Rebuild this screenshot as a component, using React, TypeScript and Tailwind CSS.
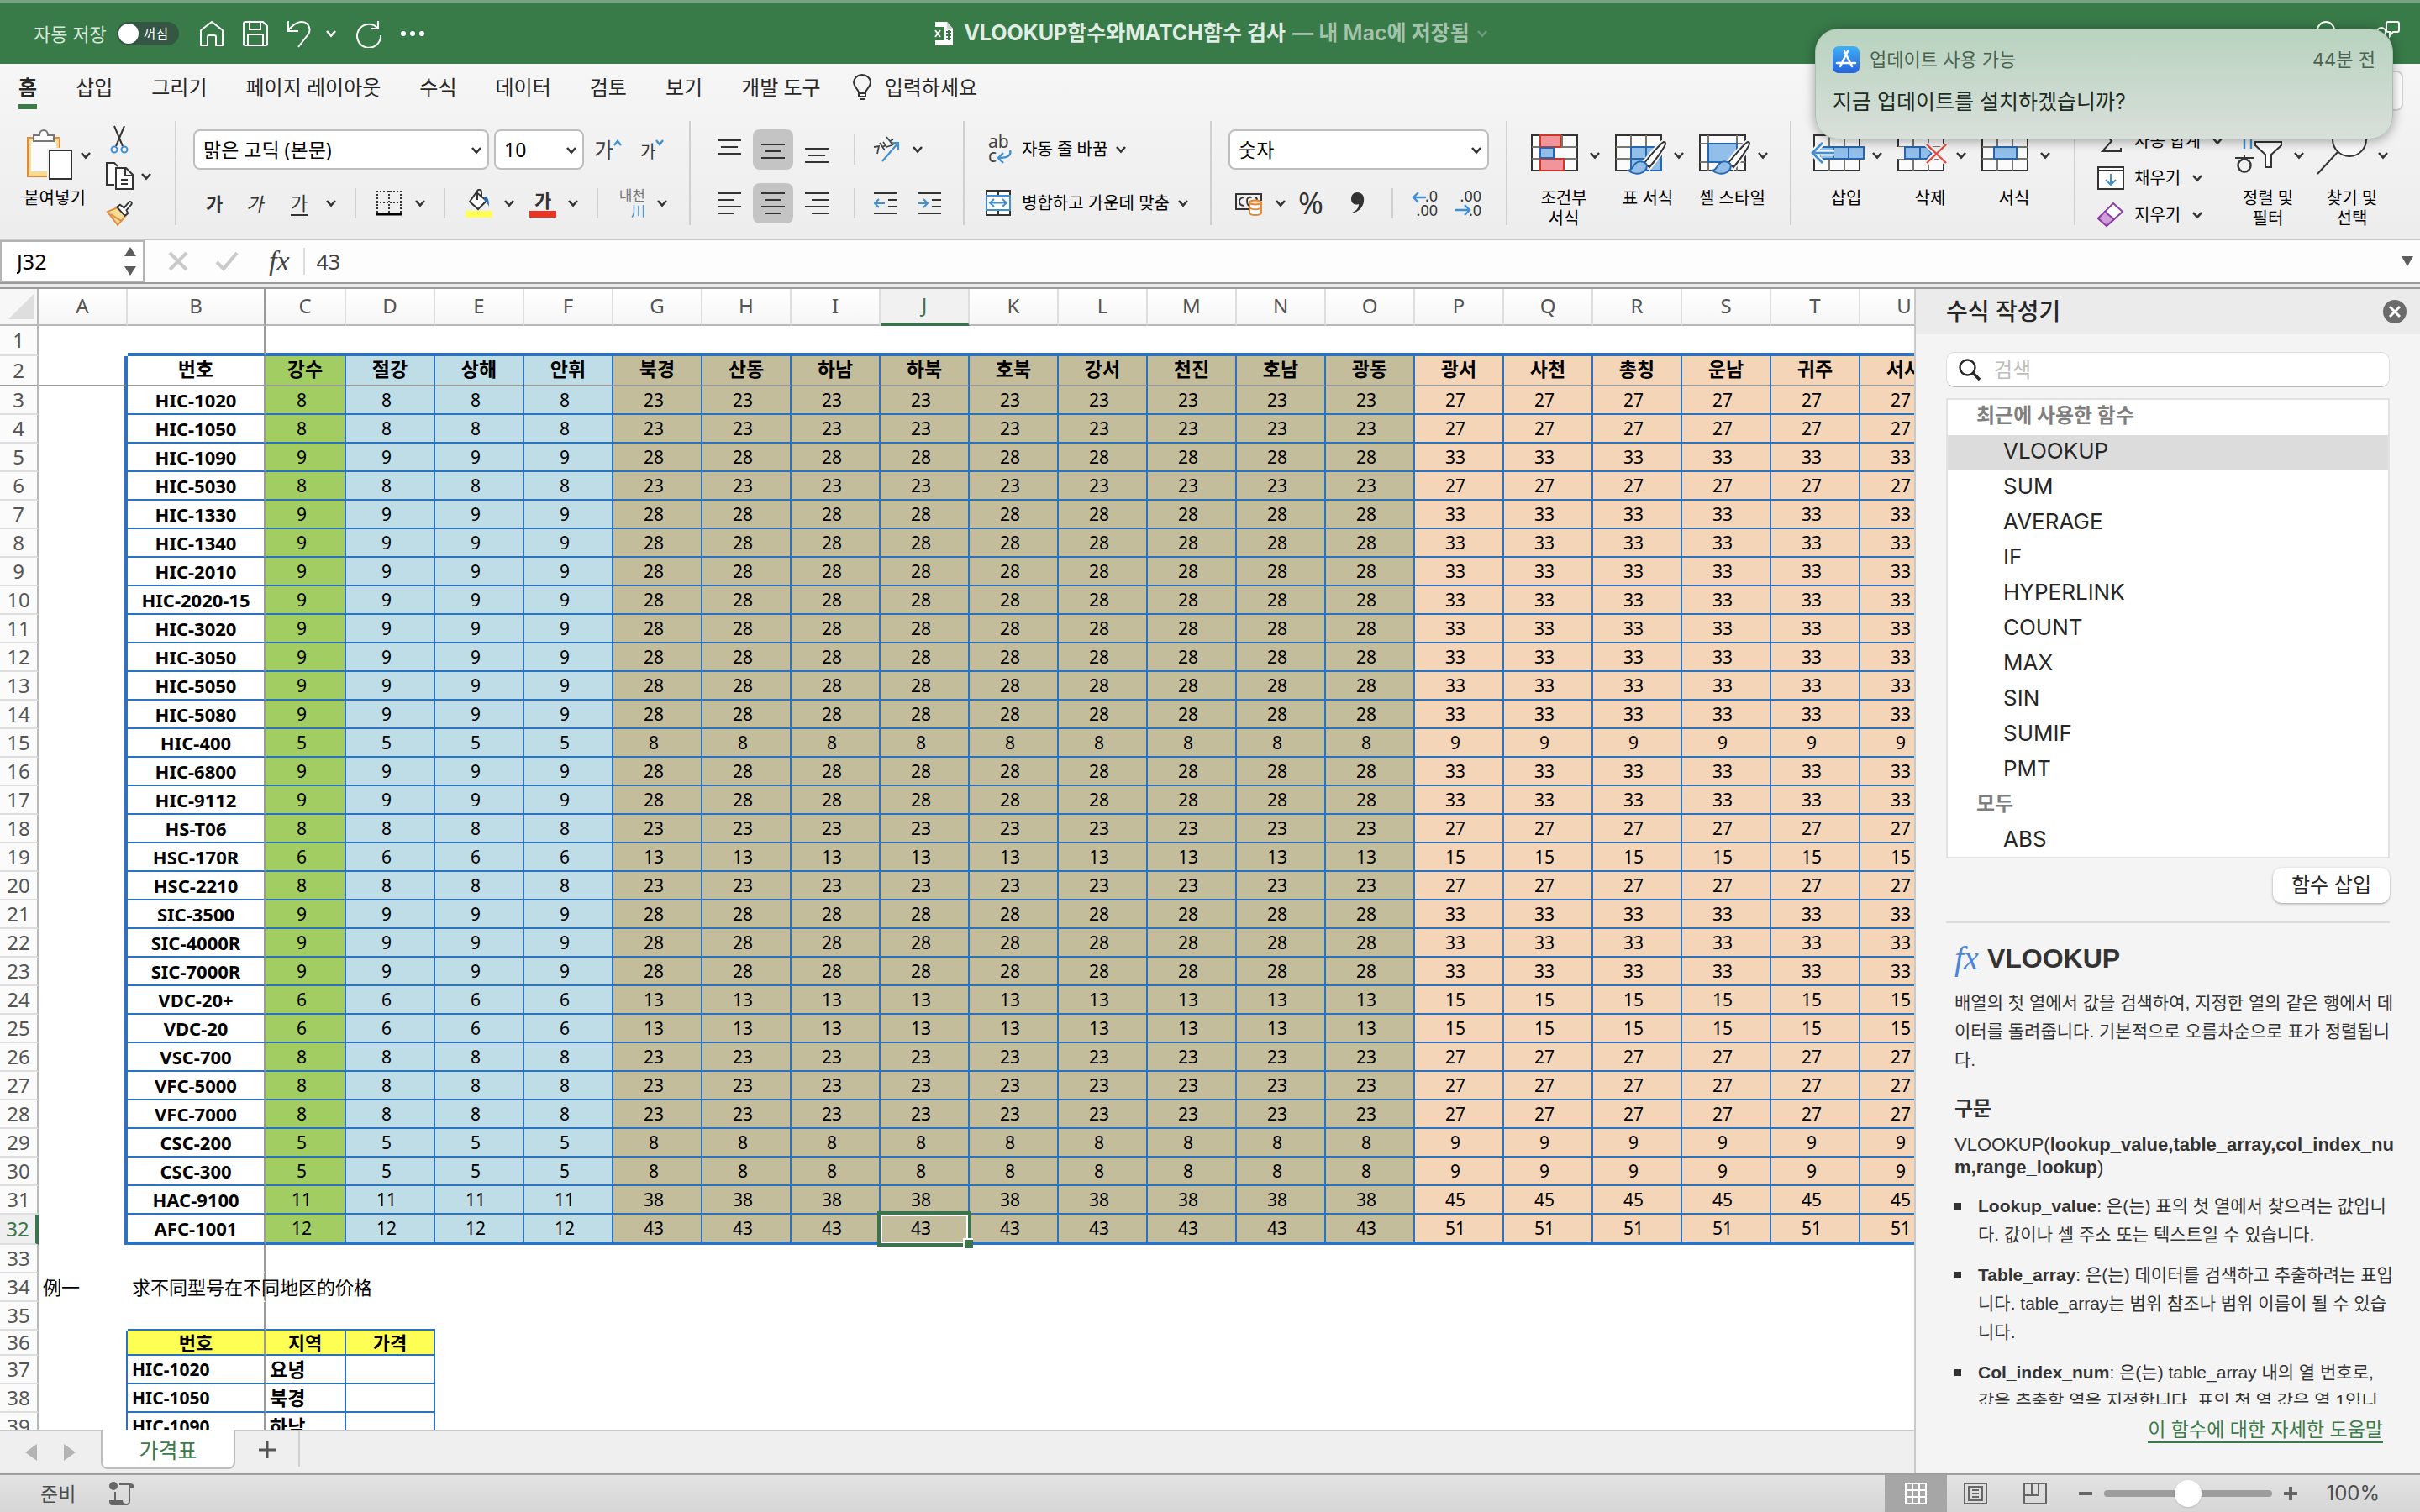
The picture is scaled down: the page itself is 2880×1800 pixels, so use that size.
import React from "react";
import clsx from "clsx";

const columns = "ABCDEFGHIJKLMNOPQRSTU".split("");

const regions = [
  "강수", "절강", "상해", "안휘", "북경", "산동", "하남", "하북", "호북", "강서",
  "천진", "호남", "광동", "광서", "사천", "총칭", "운남", "귀주", "서사",
];

// price per tier: [near, middle, far]
const tiers: Record<number, number[]> = {
  5: [5, 8, 9],
  6: [6, 13, 15],
  8: [8, 23, 27],
  9: [9, 28, 33],
  11: [11, 38, 45],
  12: [12, 43, 51],
};

const products: [string, number][] = [
  ["HIC-1020", 8], ["HIC-1050", 8], ["HIC-1090", 9], ["HIC-5030", 8], ["HIC-1330", 9],
  ["HIC-1340", 9], ["HIC-2010", 9], ["HIC-2020-15", 9], ["HIC-3020", 9], ["HIC-3050", 9],
  ["HIC-5050", 9], ["HIC-5080", 9], ["HIC-400", 5], ["HIC-6800", 9], ["HIC-9112", 9],
  ["HS-T06", 8], ["HSC-170R", 6], ["HSC-2210", 8], ["SIC-3500", 9], ["SIC-4000R", 9],
  ["SIC-7000R", 9], ["VDC-20+", 6], ["VDC-20", 6], ["VSC-700", 8], ["VFC-5000", 8],
  ["VFC-7000", 8], ["CSC-200", 5], ["CSC-300", 5], ["HAC-9100", 11], ["AFC-1001", 12],
];

const lookups = [
  ["HIC-1020", "요녕"],
  ["HIC-1050", "북경"],
  ["HIC-1090", "하남"],
];

const recentFunctions = ["VLOOKUP", "SUM", "AVERAGE", "IF", "HYPERLINK", "COUNT", "MAX", "SIN", "SUMIF", "PMT"];

const tabs = ["홈", "삽입", "그리기", "페이지 레이아웃", "수식", "데이터", "검토", "보기", "개발 도구"];

const regionColor = (i: number) => {
  if (i === 0) return "bg-[#a2cd62]";
  if (i < 4) return "bg-[#bfdde7]";
  if (i < 13) return "bg-[#c4bd9b]";
  return "bg-[#f5d5b8]";
};

const tierIndex = (i: number) => (i < 4 ? 0 : i < 13 ? 1 : 2);

/* ---------- small pieces ---------- */

function Chevron({ className = "text-[#333]" }: { className?: string }) {
  return (
    <svg width="14" height="10" viewBox="0 0 14 10" className={clsx("shrink-0", className)} fill="none" stroke="currentColor" strokeWidth="2.6">
      <path d="M2 2l5 5.5L12 2" />
    </svg>
  );
}

function ChevronButton({ label }: { label: string }) {
  return (
    <button aria-label={label} className="flex h-8 w-6 shrink-0 items-center justify-center">
      <Chevron />
    </button>
  );
}

function Split({ label, children }: { label: string; children: React.ReactNode }) {
  return (
    <div className="flex items-center gap-2">
      <button aria-label={label} className="flex items-center justify-center">{children}</button>
      <ChevronButton label={`${label} 옵션`} />
    </div>
  );
}

const Rule = ({ className = "mr-6" }: { className?: string }) => (
  <div className={clsx("ml-4 h-9 w-[2px] shrink-0 bg-[#d0d0d0]", className)} />
);

const GroupRule = () => <div className="h-[124px] w-[2px] shrink-0 bg-[#d0d0d0]" />;

function LinesIcon({ rows, stroke = "#333" }: { rows: [number, number, number][]; stroke?: string }) {
  return (
    <svg width="28" height="36" viewBox="0 0 28 36" stroke={stroke} strokeWidth="2">
      {rows.map(([x1, x2, y]) => (
        <line key={y} x1={x1} x2={x2} y1={y} y2={y} />
      ))}
    </svg>
  );
}

function AlignButton({ label, active, children }: { label: string; active?: boolean; children: React.ReactNode }) {
  return (
    <button aria-label={label} aria-pressed={!!active} className={clsx("flex size-12 items-center justify-center rounded-lg", active && "bg-[#c4c4c4]")}>
      {children}
    </button>
  );
}

function BigButton({ label, children }: { label: React.ReactNode; children: React.ReactNode }) {
  return (
    <button className="flex w-[100px] shrink-0 flex-col gap-2 text-black">
      <span className="flex items-center gap-1">
        <svg width="60" height="62" viewBox="0 0 60 62" fill="none" overflow="visible">{children}</svg>
        <span className="flex w-6 justify-center"><Chevron /></span>
      </span>
      <span className="w-[78px] text-center text-[20px] leading-6 whitespace-nowrap">{label}</span>
    </button>
  );
}

function SmallButton({ label, icon }: { label: string; icon: React.ReactNode }) {
  return (
    <button className="flex h-11 items-center text-[20px] whitespace-nowrap text-black">
      <span className="mr-3 flex w-8 justify-center">{icon}</span>
      {label}
      <span className="ml-2 flex w-6 justify-center"><Chevron /></span>
    </button>
  );
}

const Grid = ({ x = 1, y = 7 }: { x?: number; y?: number }) => (
  <>
    <rect x={x} y={y} width="54" height="42" fill="#fbfbfb" stroke="#333" strokeWidth="2" />
    <path d={`M${x + 18} ${y}v42M${x + 36} ${y}v42M${x} ${y + 14}h54M${x} ${y + 28}h54`} stroke="#777770" strokeWidth="2" />
  </>
);

const PaintBrush = () => (
  <>
    <path d="M58 15c-3 1-17 17-23 25l6 5C48 37 60 20 60 17c0-1-1-2-2-2z" fill="#fff" stroke="#f2f2f2" strokeWidth="6" />
    <path d="M58 15c-3 1-17 17-23 25l6 5C48 37 60 20 60 17c0-1-1-2-2-2z" fill="#fff" stroke="#333" strokeWidth="2" />
    <path d="M16 49c5-1 5-5 8-8 4-4 10-3 13 0 2 4 0 8-4 10-5 3-12 2-17-2z" fill="#92bfe9" stroke="#2766b0" strokeWidth="2" />
  </>
);

/* ---------- title bar ---------- */

function TitleBar() {
  return (
    <header className="relative flex h-[76px] items-center justify-between border-t-4 border-[#76a483] bg-[#387a48] px-10 text-white">
      <div className="flex items-center">
        <label htmlFor="autosave" className="text-[22px] text-[#dbe8de]">자동 저장</label>
        <span className="relative ml-3 flex h-7 w-[74px] items-center rounded-full bg-[#355643] pr-3 pl-8 text-[16px]">
          <input id="autosave" type="checkbox" role="switch" className="absolute inset-0 appearance-none" />
          <span className="absolute top-[2px] left-[2px] size-6 rounded-full bg-white shadow" />
          꺼짐
        </span>
        <div className="ml-6 flex items-center gap-[22px]">
          <button aria-label="홈">
            <svg width="30" height="32" viewBox="0 0 30 32" fill="none" stroke="#fff" strokeWidth="2">
              <path d="M2 12L15 2l13 10v18h-8V20c0-1-1-2-2-2h-6c-1 0-2 1-2 2v10H2z" strokeLinejoin="round" />
            </svg>
          </button>
          <button aria-label="저장">
            <svg width="30" height="30" viewBox="0 0 30 30" fill="none" stroke="#fff" strokeWidth="2">
              <path d="M3 1h21l5 5v21a2 2 0 01-2 2H3a2 2 0 01-2-2V3a2 2 0 012-2z" />
              <path d="M8 1v9h13V1M6 29V16h18v13" />
            </svg>
          </button>
          <div className="flex items-center gap-4">
            <button aria-label="실행 취소">
              <svg width="30" height="34" viewBox="0 0 30 34" fill="none" stroke="#fff" strokeWidth="2">
                <path d="M2 2v12h12M2 13C8 6 13 2 19 3c8 1 11 10 6 16L14 33" />
              </svg>
            </button>
            <Chevron className="text-white" />
          </div>
          <button aria-label="다시 실행">
            <svg width="32" height="34" viewBox="0 0 32 34" fill="none" stroke="#fff" strokeWidth="2">
              <path d="M27 2v9h-9M26 10a14 14 0 10 4 9" />
            </svg>
          </button>
          <button aria-label="더 보기" className="flex gap-[5px]">
            <i className="size-[6px] rounded-full bg-white" />
            <i className="size-[6px] rounded-full bg-white" />
            <i className="size-[6px] rounded-full bg-white" />
          </button>
        </div>
      </div>

      <h1 className="absolute inset-x-0 flex items-center justify-center font-[Inter,'Noto_Sans_CJK_KR',sans-serif] text-[25px] font-bold text-[#e1ede4]">
        <svg width="26" height="30" viewBox="0 0 26 30" className="mr-3">
          <path d="M4 1h14l7 8v20H4z" fill="#fff" />
          <path d="M18 1v8h7z" fill="#c9d8cd" />
          <rect x="0" y="7" width="15" height="16" fill="#387a48" />
          <path d="M4 11l6 8M10 11l-6 8" stroke="#fff" strokeWidth="2" />
          <path d="M17 13h6M17 17h6M17 21h6M20 11v12" stroke="#387a48" strokeWidth="2" />
        </svg>
        VLOOKUP함수와MATCH함수 검사
        <span className="ml-2 font-semibold text-[#a5c2ad]">— 내 Mac에 저장됨</span>
        <Chevron className="ml-2 text-[#6f9d7c]" />
      </h1>

      <div className="flex items-center gap-12">
        <button aria-label="검색">
          <svg width="28" height="32" viewBox="0 0 28 32" fill="none" stroke="#fff" strokeWidth="2">
            <circle cx="16" cy="12" r="10" />
            <path d="M9 19l-8 10" />
          </svg>
        </button>
        <button aria-label="공유" className="-mr-4">
          <svg width="28" height="32" viewBox="0 0 28 32" fill="none" stroke="#fff" strokeWidth="2">
            <path d="M14 2h11a2 2 0 012 2v8a2 2 0 01-2 2h-5l-4 5v-5h-2a2 2 0 01-2-2V4a2 2 0 012-2z" />
            <circle cx="6" cy="14" r="5" />
            <path d="M1 30c0-10 11-10 11 0" />
          </svg>
        </button>
      </div>
    </header>
  );
}

function Notification() {
  return (
    <aside className="absolute top-[34px] right-8 h-[132px] w-[688px] rounded-[28px] border border-[#a9bfaf] bg-linear-to-b from-[#b8d3bf] to-[#d9dfda] px-5 pt-[18px] font-[Inter,'Noto_Sans_CJK_KR',sans-serif] shadow-[0_2px_14px_rgba(0,0,0,0.35)]">
      <div className="flex h-9 items-center justify-between text-[22px] text-[#4a6350]">
        <div className="flex items-center gap-3">
          <svg width="32" height="32" viewBox="0 0 32 32">
            <defs>
              <linearGradient id="store" x1="0" x2="0" y1="0" y2="1">
                <stop offset="0" stopColor="#3fb0f5" />
                <stop offset="1" stopColor="#2762dc" />
              </linearGradient>
            </defs>
            <rect width="32" height="32" rx="7" fill="url(#store)" />
            <path d="M14 6l9 18M18 6L9 24M5 20h14M23 20h4" stroke="#fff" strokeWidth="2.6" strokeLinecap="round" />
          </svg>
          업데이트 사용 가능
        </div>
        <span>44분 전</span>
      </div>
      <p className="mt-[14px] text-[25px] leading-9 text-[#202b23]">지금 업데이트를 설치하겠습니까?</p>
    </aside>
  );
}

/* ---------- ribbon ---------- */

function Tabs() {
  return (
    <nav className="flex h-[68px] items-start gap-[46px] pt-2 pl-[22px] text-[24px] leading-10 text-[#262626]">
      {tabs.map((tab, i) => (
        <button
          key={tab}
          className={clsx("border-b-[6px]", i === 0 ? "border-[#3b7a49] font-bold" : "border-transparent")}
        >
          {tab}
        </button>
      ))}
      <button className="-ml-2 flex items-center gap-4">
        <svg width="22" height="32" viewBox="0 0 22 32" fill="none" stroke="#333" strokeWidth="2">
          <path d="M7 23c0-5-6-7-6-13a10 9 0 0120 0c0 6-6 8-6 13zM7 23v4h8v-4M8 30h6" />
        </svg>
        입력하세요
      </button>
      <button aria-label="공유" className="mr-5 ml-auto h-12 w-24 rounded-lg border-2 border-[#d4d4d4] bg-white" />
    </nav>
  );
}

function Picker({ label, value, className }: { label: string; value: string; className: string }) {
  return (
    <div className={clsx("relative h-12", className)}>
      <select aria-label={label} className="size-full appearance-none rounded-lg border-2 border-[#bebebe] bg-white px-[10px] text-[23px] leading-none text-black">
        <option>{value}</option>
      </select>
      <Chevron className="pointer-events-none absolute top-5 right-2 text-[#333]" />
    </div>
  );
}

function FontGroup() {
  return (
    <div className="flex flex-col gap-4 px-5 pt-[10px]">
      <div className="flex items-center gap-[6px]">
        <Picker label="글꼴" value="맑은 고딕 (본문)" className="w-[352px]" />
        <Picker label="글꼴 크기" value="10" className="w-[107px]" />
        <button aria-label="글꼴 크게" className="ml-[6px] flex h-10 items-start">
          <span className="text-[25px] leading-10 text-[#444]">가</span>
          <svg width="10" height="8" viewBox="0 0 10 8" fill="none" stroke="#3f8fd2" strokeWidth="2.4" className="mt-2"><path d="M1 7l4-5 4 5" /></svg>
        </button>
        <button aria-label="글꼴 작게" className="ml-4 flex h-10 items-start">
          <span className="text-[20px] leading-[46px] text-[#333]">가</span>
          <svg width="10" height="8" viewBox="0 0 10 8" fill="none" stroke="#3f8fd2" strokeWidth="2.4" className="mt-2"><path d="M1 1l4 5 4-5" /></svg>
        </button>
      </div>
      <div className="flex h-12 items-center text-[22px] text-[#333]">
        <button className="w-[50px] font-bold">가</button>
        <button className="w-[50px]"><span className="inline-block -skew-x-12">가</span></button>
        <button className="ml-4 w-5 border-b-2 border-[#333] leading-7">가</button>
        <div className="ml-4"><ChevronButton label="밑줄 옵션" /></div>
        <Rule />
        <Split label="테두리">
          <svg width="32" height="32" viewBox="0 0 32 32" stroke="#333" strokeWidth="2">
            <path d="M0 2h30M1 1v26M29 1v26M15 1v26M0 15h30" strokeDasharray="2 2" />
            <path d="M0 29h30" stroke="#000" strokeWidth="3" />
          </svg>
        </Split>
        <Rule />
        <Split label="채우기 색">
          <svg width="32" height="34" viewBox="0 0 32 34" fill="none">
            <path d="M13 4l12 10-10 10-10-9z" fill="#fff" stroke="#333" strokeWidth="2" />
            <path d="M14 13V3c0-3 5-3 5 1v6" stroke="#333" strokeWidth="2" />
            <path d="M22 9c5 0 6 4 6 12-2-4-3-6-6-8z" fill="#2766b0" />
            <rect y="26" width="32" height="8" fill="#fffe54" />
          </svg>
        </Split>
        <div className="w-3" />
        <Split label="글꼴 색">
          <span className="flex flex-col items-center font-bold leading-[25px]">
            가
            <span className="h-2 w-8 bg-[#e93323]" />
          </span>
        </Split>
        <Rule />
        <Split label="윗주">
          <span className="flex w-8 flex-col items-end text-[17px] leading-[18px] text-[#777]">
            <span className="whitespace-nowrap">내천</span>
            <span className="text-[#3f8fd2]">川</span>
          </span>
        </Split>
      </div>
    </div>
  );
}

function AlignmentGroup() {
  return (
    <div className="flex flex-col gap-4 pt-[10px] pr-4 pl-[22px]">
      <div className="flex items-center gap-1">
        <AlignButton label="위쪽 맞춤"><LinesIcon rows={[[0, 28, 7], [4, 24, 15], [0, 28, 23]]} /></AlignButton>
        <AlignButton label="가운데 맞춤" active><LinesIcon rows={[[0, 28, 12], [4, 24, 20], [0, 28, 28]]} /></AlignButton>
        <AlignButton label="아래쪽 맞춤"><LinesIcon rows={[[0, 28, 17], [4, 24, 25], [0, 28, 33]]} /></AlignButton>
        <Rule className="mr-4" />
        <Split label="방향">
          <svg width="34" height="34" viewBox="0 0 34 34" fill="none">
            <path d="M12 31L31 9M23 9h8v8" stroke="#3f8fd2" strokeWidth="2.2" />
            <g stroke="#444" strokeWidth="1.8">
              <path d="M2 14l6-1-2 9M9 9l6 9M12 14l4-2M13 8l4 6 6-2M17 2l8 10M21 7l4-2" />
            </g>
          </svg>
        </Split>
      </div>
      <div className="flex items-center gap-1">
        <AlignButton label="왼쪽 맞춤"><LinesIcon rows={[[0, 28, 6], [0, 20, 14], [0, 28, 22], [0, 20, 30]]} /></AlignButton>
        <AlignButton label="중앙 맞춤" active><LinesIcon rows={[[0, 28, 6], [4, 24, 14], [0, 28, 22], [4, 24, 30]]} /></AlignButton>
        <AlignButton label="오른쪽 맞춤"><LinesIcon rows={[[0, 28, 6], [8, 28, 14], [0, 28, 22], [8, 28, 30]]} /></AlignButton>
        <Rule className="mr-2" />
        <AlignButton label="내어쓰기">
          <svg width="28" height="36" viewBox="0 0 28 36" fill="none" stroke="#333" strokeWidth="2">
            <path d="M0 6h28M17 14h11M17 22h11M0 30h28" />
            <path d="M13 18H1M6 13l-5 5 5 5" stroke="#3f8fd2" />
          </svg>
        </AlignButton>
        <AlignButton label="들여쓰기">
          <svg width="28" height="36" viewBox="0 0 28 36" fill="none" stroke="#333" strokeWidth="2">
            <path d="M0 6h28M17 14h11M17 22h11M0 30h28" />
            <path d="M0 18h12M7 13l5 5-5 5" stroke="#3f8fd2" />
          </svg>
        </AlignButton>
      </div>
    </div>
  );
}

function WrapGroup() {
  return (
    <div className="flex flex-col gap-4 pt-[10px] pr-5 pl-6">
      <div className="flex h-12 items-center text-[20px] whitespace-nowrap text-black">
        <button className="flex items-center gap-3">
          <svg width="32" height="36" viewBox="0 0 32 36" fill="none" overflow="visible">
            <text x="4" y="16" fontSize="21" fill="#444" fontFamily="Noto Sans">ab</text>
            <text x="4" y="33" fontSize="21" fill="#444" fontFamily="Noto Sans">c</text>
            <path d="M30 19c2 6-3 9-13 9M22 22l-6 6 6 6" stroke="#3f8fd2" strokeWidth="2.4" />
          </svg>
          자동 줄 바꿈
        </button>
        <span className="ml-1"><ChevronButton label="줄 바꿈 옵션" /></span>
      </div>
      <div className="flex h-12 items-center text-[20px] whitespace-nowrap text-black">
        <button className="flex items-center gap-3">
          <svg width="32" height="32" viewBox="0 0 32 32" fill="none" strokeWidth="2">
            <path d="M2 1h28v29H2zM16 1v6M16 24v6" stroke="#333" fill="#fff" />
            <path d="M2 7h28v17H2z" fill="#fff" stroke="#3f8fd2" />
            <path d="M6 15.5h20M11 11l-5 4.500 5 4.500M21 11l5 4.500-5 4.500" stroke="#3f8fd2" />
          </svg>
          병합하고 가운데 맞춤
        </button>
        <span className="ml-1"><ChevronButton label="병합 옵션" /></span>
      </div>
    </div>
  );
}

function NumberGroup() {
  return (
    <div className="flex flex-col gap-4 px-5 pt-[10px]">
      <Picker label="표시 형식" value="숫자" className="w-[310px]" />
      <div className="flex h-12 items-center pl-2">
        <Split label="회계 표시 형식">
          <svg width="34" height="32" viewBox="0 0 34 32" fill="none">
            <path d="M16 23H1V5h30v8" stroke="#333" strokeWidth="2" />
            <path d="M11 9c-4 0-6 2-6 5s2 5 6 5M20 9c-4-1-6 1-6 4s0 4 2 6M23 9c2 0 3 1 3 3" stroke="#333" strokeWidth="1.800" />
            <path d="M17 15v12c0 4 14 4 14 0V15" fill="#fff" stroke="#e08a3e" strokeWidth="2" />
            <ellipse cx="24" cy="15" rx="7" ry="2.500" fill="#fbe3c0" stroke="#e08a3e" strokeWidth="2" />
            <path d="M17 21c2 3 12 3 14 0" stroke="#e08a3e" strokeWidth="2" />
          </svg>
        </Split>
        <button className="w-12 text-[36px] leading-none text-[#333]">%</button>
        <button aria-label="쉼표 스타일" className="ml-2 flex w-12 justify-center">
          <svg width="16" height="26" viewBox="0 0 16 26" fill="#333"><path d="M7 0c6 0 9 4 8 11-1 7-6 12-14 14v-1c5-2 8-5 8-10C3 16 0 12 0 8c0-5 3-8 7-8z" /></svg>
        </button>
        <Rule className="mr-[22px]" />
        <div className="flex gap-5 text-[#333]">
          <button aria-label="자릿수 늘림">
            <svg width="32" height="34" viewBox="0 0 32 34" fill="none" overflow="visible">
              <text x="31" y="15" textAnchor="end" fontSize="18" fill="#333" fontFamily="Noto Sans">.0</text>
              <text x="31" y="32" textAnchor="end" fontSize="18" fill="#333" fontFamily="Noto Sans">.00</text>
              <path d="M17 10H2M8 4l-6 6 6 6" stroke="#3f8fd2" strokeWidth="2.400" />
            </svg>
          </button>
          <button aria-label="자릿수 줄임">
            <svg width="32" height="34" viewBox="0 0 32 34" fill="none" overflow="visible">
              <text x="31" y="15" textAnchor="end" fontSize="18" fill="#333" fontFamily="Noto Sans">.00</text>
              <text x="31" y="32" textAnchor="end" fontSize="18" fill="#333" fontFamily="Noto Sans">.0</text>
              <path d="M0 25h16M11 19l6 6-6 6" stroke="#3f8fd2" strokeWidth="2.400" />
            </svg>
          </button>
        </div>
      </div>
    </div>
  );
}

function Ribbon() {
  return (
    <section className="border-b-2 border-[#c6c6c6] bg-linear-to-b from-[#f6f6f6] to-[#ededed]">
      <Tabs />
      <div className="flex h-[140px] overflow-hidden">
        <div className="flex pt-[10px] pr-[22px] pl-[26px]">
          <BigButton label="붙여넣기">
            <path d="M14 10H7v46h38V10h-7" fill="#f7dc95" stroke="#e08a3e" strokeWidth="2" />
            <rect x="11" y="14" width="30" height="36" fill="#fbfbfb" />
            <path d="M14 14V7h7c0-8 10-8 10 0h7v7z" fill="#fbfbfb" stroke="#777" strokeWidth="2" />
            <rect x="30" y="22" width="32" height="40" fill="#f2f2f2" />
            <rect x="33" y="25" width="26" height="34" fill="#fff" stroke="#333" strokeWidth="2" />
          </BigButton>
          <div className="-mt-[10px] flex w-[60px] flex-col">
            <button aria-label="잘라내기" className="flex h-11 w-8 items-center justify-center">
              <svg width="22" height="34" viewBox="0 0 22 34" fill="none" strokeWidth="2">
                <path d="M5 1l10 24M17 1L7 25" stroke="#333" />
                <circle cx="5" cy="29" r="3.500" stroke="#3f8fd2" />
                <circle cx="17" cy="29" r="3.500" stroke="#3f8fd2" />
              </svg>
            </button>
            <div className="flex h-11 items-center">
              <button aria-label="복사" className="w-9">
                <svg width="34" height="34" viewBox="0 0 34 34" fill="#fbfbfb" stroke="#333" strokeWidth="2">
                  <path d="M10 27H1V1h9l4 4" />
                  <path d="M12 7h12l8 8v17H12zM23 7v9h9M18 21h8M18 26h8" />
                </svg>
              </button>
              <ChevronButton label="복사 옵션" />
            </div>
            <button aria-label="서식 복사" className="flex h-11 w-8 items-center">
              <svg width="34" height="32" viewBox="0 0 34 32" fill="none" strokeWidth="2">
                <path d="M2 14l12-5 12 9-11 13z" fill="#f7dc95" stroke="#e08a3e" />
                <path d="M6 17l14 9" stroke="#e08a3e" />
                <path d="M14 8l4-3 5 4 6-7c2-2 5 0 3 3l-6 7 2 4-4 3z" fill="#fff" stroke="#333" />
              </svg>
            </button>
          </div>
        </div>
        <GroupRule />
        <FontGroup />
        <GroupRule />
        <AlignmentGroup />
        <GroupRule />
        <WrapGroup />
        <GroupRule />
        <NumberGroup />
        <GroupRule />
        <div className="flex pt-[10px] pr-2 pl-7">
          <BigButton label={<>조건부<br />서식</>}>
            <Grid />
            <path d="M11 7h24v14H11zM11 35h28v14H11z" fill="#f1959a" stroke="#c9362a" strokeWidth="2" />
            <path d="M28 22h17v12H28z" fill="#fbfbfb" />
            <path d="M11 22h16v12H11z" fill="#92bfe9" stroke="#2766b0" strokeWidth="2" />
          </BigButton>
          <BigButton label="표 서식">
            <Grid />
            <path d="M19 21h36v28H19z" fill="#92bfe9" stroke="#2766b0" strokeWidth="2" />
            <path d="M37 21v28M19 35h36" stroke="#2766b0" strokeWidth="2" />
            <PaintBrush />
          </BigButton>
          <BigButton label="셀 스타일">
            <rect x="1" y="7" width="54" height="42" fill="#fbfbfb" stroke="#333" strokeWidth="2" />
            <path d="M11 7v42M45 7v42M1 17h54M1 39h54" stroke="#777770" strokeWidth="2" />
            <path d="M11 17h34v22H11z" fill="#92bfe9" stroke="#2766b0" strokeWidth="2" />
            <PaintBrush />
          </BigButton>
        </div>
        <GroupRule />
        <div className="flex pt-[10px] pr-[10px] pl-[26px]">
          <BigButton label="삽입">
            <Grid />
            <path d="M8 21h52v14H8z" fill="#92bfe9" stroke="#2766b0" strokeWidth="2" />
            <path d="M24 21v14M42 21v14" stroke="#2766b0" strokeWidth="2" />
            <path d="M25 28H-1M11 16L-1 28l12 12" stroke="#f2f2f2" strokeWidth="7" />
            <path d="M25 28H-1M11 16L-1 28l12 12" stroke="#3f8fd2" strokeWidth="2.600" />
          </BigButton>
          <BigButton label="삭제">
            <Grid />
            <path d="M0 21h60v14H0z" fill="#f2f2f2" />
            <path d="M9 21h26l6 7-6 7H9z" fill="#92bfe9" stroke="#2766b0" strokeWidth="2" />
            <path d="M27 21v14" stroke="#2766b0" strokeWidth="2" />
            <path d="M35 18l23 22M58 18L35 40" stroke="#f2f2f2" strokeWidth="6" />
            <path d="M35 18l23 22M58 18L35 40" stroke="#e5483d" strokeWidth="2.400" />
          </BigButton>
          <BigButton label="서식">
            <Grid />
            <path d="M15 21h27v14H15z" fill="#92bfe9" stroke="#2766b0" strokeWidth="2" />
          </BigButton>
        </div>
        <GroupRule />
        <div className="flex pt-[2px] pl-[26px]">
          <div className="flex w-[164px] flex-col">
            <SmallButton
              label="자동 합계"
              icon={<svg width="26" height="28" viewBox="0 0 26 28" fill="none" stroke="#333" strokeWidth="2"><path d="M24 4V1H3l11 13L3 26h22v-4" /></svg>}
            />
            <SmallButton
              label="채우기"
              icon={
                <svg width="32" height="28" viewBox="0 0 32 28" fill="none" strokeWidth="2">
                  <path d="M1 1h30v26H1zM1 5h30" stroke="#333" fill="#fff" />
                  <path d="M16 9v13M10 16l6 6 6-6" stroke="#3f8fd2" />
                </svg>
              }
            />
            <SmallButton
              label="지우기"
              icon={
                <svg width="32" height="30" viewBox="0 0 32 30" strokeWidth="2" stroke="#8c3fa3">
                  <path d="M19 1l11 10-19 17L1 19z" fill="#fff" />
                  <path d="M9 11l11 9-9 8-10-9z" fill="#cf9fdb" />
                </svg>
              }
            />
          </div>
          <div className="flex pt-2">
            <BigButton label={<>정렬 및<br />필터</>}>
              <path d="M11 5v18" stroke="#3f8fd2" strokeWidth="2.400" />
              <path d="M19 5v18" stroke="#3f8fd2" strokeWidth="2.400" />
              <path d="M0 34h22M11 30v4" stroke="#333" strokeWidth="2" />
              <circle cx="11" cy="43" r="7.500" stroke="#333" strokeWidth="2.400" />
              <path d="M24 15h31v4L43 30v15h-7V30L24 19z" fill="#fff" stroke="#333" strokeWidth="2" />
            </BigButton>
            <BigButton label={<>찾기 및<br />선택</>}>
              <circle cx="36" cy="12" r="20" fill="#fbfbfb" stroke="#333" strokeWidth="2" />
              <path d="M22 27L-2 53" stroke="#333" strokeWidth="2" />
            </BigButton>
          </div>
        </div>
      </div>
    </section>
  );
}

/* ---------- formula bar ---------- */

function FormulaBar() {
  return (
    <div className="flex h-[58px] items-center border-b-2 border-[#9b9b9b] bg-[#e9e9e9] pb-1">
      <div className="flex size-full items-center border-b-2 border-[#9b9b9b] bg-[#fdfdfd]">
        <div className="flex h-full w-[172px] items-center justify-between border-2 border-[#b4b4b4] bg-white pr-2">
          <input aria-label="이름 상자" defaultValue="J32" className="w-28 pl-[18px] text-[25px] leading-none text-black outline-none" />
          <svg width="14" height="34" viewBox="0 0 14 34" fill="#5c5c5c"><path d="M7 0l7 11H0zM7 34L0 23h14z" /></svg>
        </div>
        <div className="ml-7 flex items-center gap-8">
          <button aria-label="취소">
            <svg width="24" height="24" viewBox="0 0 24 24" stroke="#cacaca" strokeWidth="4"><path d="M2 2l20 20M22 2L2 22" /></svg>
          </button>
          <button aria-label="입력">
            <svg width="28" height="24" viewBox="0 0 28 24" fill="none" stroke="#cacaca" strokeWidth="4"><path d="M2 13l8 8L26 2" /></svg>
          </button>
          <button aria-label="함수 삽입" className="px-1 font-['Liberation_Serif',serif] text-[34px] leading-8 text-[#444] italic">fx</button>
        </div>
        <div className="ml-3 h-8 w-[2px] bg-[#dcdcdc]" />
        <input aria-label="수식 입력줄" defaultValue="43" className="min-w-0 flex-1 px-[14px] text-[25px] leading-none text-[#444] outline-none" />
        <svg width="14" height="12" viewBox="0 0 14 12" fill="#5c5c5c" className="mr-2"><path d="M0 0h14L7 12z" /></svg>
      </div>
    </div>
  );
}

/* ---------- sheet ---------- */

function RowHead({ n }: { n: number }) {
  const active = n === 32;
  return (
    <th
      scope="row"
      className={clsx(
        "border-r-2 border-b-2 p-0 text-[24px] font-normal",
        active ? "border-r-4 border-r-[#3b734c] bg-[#efefef] text-[#3b734c]" : "border-r-[#b8b8b8] bg-[#fbfbfb] text-[#555]",
        n === 2 ? "border-b-[#9a9a9a]" : "border-b-[#dedede]",
      )}
    >
      {n}
    </th>
  );
}

const blank = "border-b-2 border-transparent";
const freeze = "border-r-2 border-r-[#9a9a9a]";
const grid = "border-r-2 border-b-2 border-[#2c72bd]";

// A row outside both tables; keeps the freeze line on column B
function EmptyRow({ n, a, b, outlined }: { n: number; a?: string; b?: string; outlined?: boolean }) {
  const bottom = outlined ? "border-b-[#2c72bd]" : "border-b-transparent";
  return (
    <tr className="h-[34px]">
      <RowHead n={n} />
      <td className={clsx(blank, "whitespace-nowrap")}><span className="pl-[5px]">{a}</span></td>
      <td className={clsx("border-b-2 whitespace-nowrap", freeze, bottom)}><span className="pl-[5px]">{b}</span></td>
      <td className={clsx("border-b-2", bottom)} />
      <td className={clsx("border-b-2", bottom)} />
      <td colSpan={17} />
    </tr>
  );
}

function Sheet() {
  return (
    <div className="min-h-0 flex-1 overflow-hidden bg-white">
      <table className="w-[2320px] table-fixed border-separate border-spacing-0 font-['Noto_Sans','Noto_Sans_CJK_KR','Noto_Sans_CJK_SC',sans-serif] text-[22px] leading-none text-black [&_td]:p-0">
        <colgroup>
          <col className="w-[46px]" />
          <col className="w-[106px]" />
          <col className="w-[164px]" />
          <col className="w-[96px]" />
          {columns.slice(3).map((c) => (
            <col key={c} className="w-[106px]" />
          ))}
        </colgroup>
        <thead>
          <tr className="h-11">
            <th aria-label="모두 선택" className="border-r-2 border-b-2 border-[#b8b8b8] bg-[#f7f7f7] p-0">
              <svg width="30" height="30" viewBox="0 0 30 30" className="ml-[10px]" fill="#dedede"><path d="M30 0v30H0z" /></svg>
            </th>
            {columns.map((c) => (
              <th
                key={c}
                scope="col"
                className={clsx(
                  "border-r-2 p-0 pb-[2px] text-[24px] font-normal",
                  c === "J"
                    ? "border-b-4 border-b-[#3b734c] bg-[#f1f1f1] text-[#3b734c]"
                    : "border-b-2 border-b-[#b8b8b8] bg-linear-to-b from-white to-[#f6f6f6] text-[#555]",
                  c === "B" ? "border-r-[#9a9a9a]" : "border-r-[#dedede]",
                )}
              >
                {c}
              </th>
            ))}
          </tr>
        </thead>
        <tbody>
          <tr className="h-9">
            <RowHead n={1} />
            <td />
            <td className={clsx("border-b-4 border-b-[#2c72bd]", freeze)} />
            <td colSpan={19} className="border-b-4 border-[#2c72bd]" />
          </tr>
          <tr className="h-9 text-[23px] font-bold">
            <RowHead n={2} />
            <td className="border-r-4 border-b-2 border-r-[#2c72bd] border-b-[#9a9a9a]" />
            <th className={clsx("border-b-2 border-b-[#9a9a9a] p-0 pb-1", freeze)}>번호</th>
            {regions.map((name, i) => (
              <th key={i} className={clsx("border-r-2 border-b-2 border-r-[#2c72bd] border-b-[#9a9a9a] p-0 pb-1", regionColor(i))}>
                {name}
              </th>
            ))}
          </tr>
          {products.map(([code, tier], r) => {
            const n = r + 3;
            const last = n === 32;
            return (
              <tr key={code} className={last ? "h-9" : "h-[34px]"}>
                <RowHead n={n} />
                <td className="border-r-4 border-[#2c72bd]" />
                <td className={clsx("text-center font-bold", grid, last && "border-b-4", "border-r-[#9a9a9a]")}>{code}</td>
                {regions.map((_, i) => (
                  <td key={i} className={clsx("relative text-center text-[21px]", grid, last && "border-b-4", regionColor(i))}>
                    <span className="pr-2">{tiers[tier][tierIndex(i)]}</span>
                    {last && i === 7 && (
                      <span className="absolute -top-1 -right-1 -bottom-[6px] -left-1 z-10 border-4 border-[#3b734c]">
                        <span className="block size-full border-2 border-white" />
                        <span className="absolute -right-[6px] -bottom-[6px] size-3 border-t-2 border-l-2 border-white bg-[#3b734c]" />
                      </span>
                    )}
                  </td>
                ))}
              </tr>
            );
          })}
          <EmptyRow n={33} />
          <EmptyRow n={34} a="例一" b="求不同型号在不同地区的价格" />
          <EmptyRow n={35} outlined />
          <tr className="h-[30px] text-[22px] font-bold">
            <RowHead n={36} />
            <td className="border-r-2 border-[#2c72bd]" />
            <th className={clsx("bg-[#fffe54] p-0", grid, "border-r-[#9a9a9a]")}>번호</th>
            <th className={clsx("bg-[#fffe54] p-0", grid)}>지역</th>
            <th className={clsx("bg-[#fffe54] p-0", grid)}>가격</th>
          </tr>
          {lookups.map(([code, place], i) => (
            <tr key={code} className="h-[34px] text-[21px] font-bold">
              <RowHead n={37 + i} />
              <td className="border-r-2 border-[#2c72bd]" />
              <td className={clsx(grid, "border-r-[#9a9a9a]")}><span className="pl-[5px]">{code}</span></td>
              <td className={clsx("text-[23px]", grid)}><span className="pl-[5px]">{place}</span></td>
              <td className={grid} />
            </tr>
          ))}
        </tbody>
      </table>
    </div>
  );
}

function SheetTabs() {
  return (
    <div className="flex h-[52px] shrink-0 items-start border-t-2 border-[#c9c9c9] bg-[#efefef] pl-[30px]">
      <div className="flex h-11 w-[90px] items-center gap-8 pt-[6px]">
        <button aria-label="이전 시트"><svg width="14" height="20" viewBox="0 0 14 20" fill="#b4b4b4"><path d="M14 0v20L0 10z" /></svg></button>
        <button aria-label="다음 시트"><svg width="14" height="20" viewBox="0 0 14 20" fill="#b4b4b4"><path d="M0 0v20l14-10z" /></svg></button>
      </div>
      <button className="-mt-[2px] h-[47px] w-40 rounded-b-lg border-x-2 border-b-2 border-[#bdbdbd] bg-white pt-1 text-[25px] leading-none text-[#3b7a49]">가격표</button>
      <button aria-label="새 시트" className="flex h-11 w-[75px] items-center justify-center">
        <svg width="20" height="20" viewBox="0 0 20 20" stroke="#555" strokeWidth="3"><path d="M10 0v20M0 10h20" /></svg>
      </button>
      <div className="h-[42px] w-[2px] bg-[#cfcfcf]" />
    </div>
  );
}

/* ---------- formula builder ---------- */

function Argument({ name, children }: { name: string; children: React.ReactNode }) {
  return (
    <li className="mb-[14px] flex gap-5">
      <span className="mt-[13px] size-2 shrink-0 bg-[#333]" />
      <p className="whitespace-nowrap"><b>{name}</b>{children}</p>
    </li>
  );
}

function FormulaBuilder() {
  return (
    <aside className="flex w-[602px] shrink-0 flex-col border-l-2 border-[#c9c9c9] bg-[#f4f4f4] font-[Inter,'Noto_Sans_CJK_KR',sans-serif]">
      <div className="flex h-[54px] shrink-0 items-center justify-between bg-[#ebebeb] pr-4 pl-9">
        <h2 className="text-[28px] leading-none font-medium text-[#262626]">수식 작성기</h2>
        <button aria-label="닫기">
          <svg width="28" height="28" viewBox="0 0 28 28">
            <circle cx="14" cy="14" r="14" fill="#6b6b6b" />
            <path d="M8 8l12 12M20 8L8 20" stroke="#fff" strokeWidth="3" />
          </svg>
        </button>
      </div>

      <div className="flex min-h-0 flex-1 flex-col pt-[21px] pr-9 pl-9">
        <label className="flex h-[42px] shrink-0 items-center rounded-[10px] border border-[#dcdcdc] border-b-[#b5b5b5] bg-white pl-[14px]">
          <svg width="26" height="26" viewBox="0 0 26 26" fill="none" stroke="#262626" strokeWidth="2.400">
            <circle cx="10.500" cy="10.500" r="9" />
            <path d="M17 17l8 8" strokeWidth="3.400" />
          </svg>
          <input aria-label="검색" placeholder="검색" className="ml-4 min-w-0 flex-1 text-[24px] leading-none outline-none placeholder:text-[#bdbdbd]" />
        </label>

        <div className="mt-[13px] h-[548px] shrink-0 overflow-hidden border-2 border-[#e2e2e2] bg-white text-[26px] leading-[38px] text-[#262626]">
          <h3 className="pb-1 pl-[34px] text-[24px] font-bold text-[#7f7f7f]">최근에 사용한 함수</h3>
          <ul>
            {recentFunctions.map((fn, i) => (
              <li key={fn}>
                <button className={clsx("block w-full pb-1 pl-[66px] text-left", i === 0 && "bg-[#dcdcdc]")}>{fn}</button>
              </li>
            ))}
          </ul>
          <h3 className="pb-1 pl-[34px] text-[24px] font-bold text-[#7f7f7f]">모두</h3>
          <button className="block w-full pb-1 pl-[66px] text-left">ABS</button>
        </div>

        <button className="mt-[11px] h-[42px] shrink-0 self-end rounded-[10px] bg-white px-[22px] text-[24px] leading-none text-[#262626] shadow-[0_1px_3px_rgba(0,0,0,0.35)]">함수 삽입</button>

        <div className="mt-[22px] h-[2px] shrink-0 bg-[#dcdcdc]" />

        <div className="-mr-6 min-h-0 flex-1 overflow-hidden pl-[10px] font-['Liberation_Sans','Noto_Sans_CJK_KR',sans-serif] text-[21px] leading-[34px] text-[#333]">
          <h3 className="mt-5 flex items-center text-[32px] leading-[44px] font-bold">
            <i className="mr-[10px] font-['Liberation_Serif',serif] text-[40px] leading-[44px] font-normal text-[#4a86d8]">fx</i>
            VLOOKUP
          </h3>
          <p className="mt-[14px] whitespace-nowrap">
            배열의 첫 열에서 값을 검색하여, 지정한 열의 같은 행에서 데<br />
            이터를 돌려줍니다. 기본적으로 오름차순으로 표가 정렬됩니<br />
            다.
          </p>
          <h4 className="mt-6 text-[24px] font-bold">구문</h4>
          <p className="mt-3 text-[22px] leading-[27px] whitespace-nowrap">
            VLOOKUP(<b>lookup_value,table_array,col_index_nu<br />
            m,range_lookup</b>)
          </p>
          <ul className="mt-4">
            <Argument name="Lookup_value">
              : 은(는) 표의 첫 열에서 찾으려는 값입니<br />
              다. 값이나 셀 주소 또는 텍스트일 수 있습니다.
            </Argument>
            <Argument name="Table_array">
              : 은(는) 데이터를 검색하고 추출하려는 표입<br />
              니다. table_array는 범위 참조나 범위 이름이 될 수 있습<br />
              니다.
            </Argument>
            <Argument name="Col_index_num">
              : 은(는) table_array 내의 열 번호로,<br />
              값을 추출할 열을 지정합니다. 표의 첫 열 값은 열 1입니
            </Argument>
          </ul>
        </div>

        <a href="#help" className="mt-4 mr-2 mb-9 shrink-0 self-end border-b-2 border-[#3b7a49] text-[23px] leading-7 text-[#3b7a49]">
          이 함수에 대한 자세한 도움말
        </a>
      </div>
    </aside>
  );
}

/* ---------- status bar ---------- */

function StatusBar() {
  return (
    <footer className="flex h-[46px] shrink-0 items-center justify-between border-t-2 border-[#9f9f9f] bg-linear-to-b from-[#e3e3e3] to-[#d6d6d6] text-[#4d4d4d]">
      <div className="flex items-center pl-12 text-[23px] leading-none">
        준비
        <button aria-label="매크로 기록" className="ml-10">
          <svg width="30" height="28" viewBox="0 0 30 28" fill="#666">
            <circle cx="5" cy="5" r="5" />
            <path d="M6 12h2v10h8c0 3 2 4 4 4 3 0 3-2 3-3V4H12V2h13c3 0 5 2 5 6h-5v15c0 3-2 5-5 5H4c-3 0-4-2-4-6h6z" />
          </svg>
        </button>
      </div>
      <div className="flex h-full items-center">
        <button aria-label="기본 보기" aria-pressed="true" className="flex h-full w-[74px] items-center justify-center bg-[#a6a6a6]">
          <svg width="26" height="26" viewBox="0 0 26 26" fill="none" stroke="#fff" strokeWidth="2">
            <path d="M1 1h24v24H1zM9 1v24M17 1v24M1 9h24M1 17h24" />
          </svg>
        </button>
        <button aria-label="페이지 레이아웃 보기" className="ml-5">
          <svg width="28" height="26" viewBox="0 0 28 26" fill="none" stroke="#666" strokeWidth="2">
            <path d="M1 1h26v24H1zM6 5h16v16H6zM10 9h8M10 13h8M10 17h8" />
          </svg>
        </button>
        <button aria-label="페이지 나누기 미리 보기" className="ml-[43px]">
          <svg width="28" height="26" viewBox="0 0 28 26" fill="none" stroke="#666" strokeWidth="2">
            <path d="M1 1h26v24H1zM1 15h17V1M10 1v14" />
          </svg>
        </button>
        <button aria-label="축소" className="ml-[38px] h-1 w-4 bg-[#666]" />
        <input
          type="range"
          aria-label="확대/축소"
          defaultValue={50}
          className="mx-[14px] h-2 w-[200px] appearance-none rounded-full bg-[#9c9c9c] [&::-webkit-slider-thumb]:size-8 [&::-webkit-slider-thumb]:appearance-none [&::-webkit-slider-thumb]:rounded-full [&::-webkit-slider-thumb]:bg-white [&::-webkit-slider-thumb]:shadow"
        />
        <button aria-label="확대">
          <svg width="16" height="16" viewBox="0 0 16 16" stroke="#666" strokeWidth="4"><path d="M8 0v16M0 8h16" /></svg>
        </button>
        <span className="mr-12 ml-[34px] font-[Inter,sans-serif] text-[24px] leading-none">100%</span>
      </div>
    </footer>
  );
}

export default function App() {
  return (
    <div className="relative flex h-screen flex-col overflow-hidden bg-white font-['Noto_Sans','Noto_Sans_CJK_KR',sans-serif]">
      <TitleBar />
      <Ribbon />
      <FormulaBar />
      <main className="flex min-h-0 flex-1">
        <div className="flex min-w-0 flex-1 flex-col">
          <Sheet />
          <SheetTabs />
        </div>
        <FormulaBuilder />
      </main>
      <StatusBar />
      <Notification />
    </div>
  );
}
